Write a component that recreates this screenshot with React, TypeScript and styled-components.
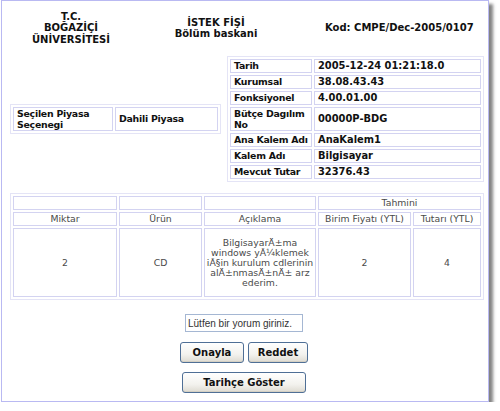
import * as React from "react";
import styled, { createGlobalStyle } from "styled-components";

const Global = createGlobalStyle`
  html, body { margin: 0; padding: 0; background: #fff; }
  body { font-family: "DejaVu Sans", Verdana, sans-serif; }
`;

const Frame = styled.div`
  box-sizing: border-box;
  margin-left: 1px;
  width: 488px;
  height: 402px;
  border: 1px solid #b9b9f2;
  background: #fff;
  box-shadow: 4px 4px 3px rgba(90, 90, 90, 0.75);
  padding: 9px 0 0 0;
`;

const Header = styled.div`
  display: grid;
  grid-template-columns: 138px 152px 1fr;
  align-items: center;
  font-weight: bold;
  font-size: 10px;
  line-height: 11.5px;
  color: #111;
  height: 36px;
`;

const HeaderCell = styled.div<{ $left?: number }>`
  text-align: ${(p) => (p.$left ? "left" : "center")};
  padding-left: ${(p) => p.$left || 0}px;
`;

const Middle = styled.div`
  display: flex;
  align-items: center;
  gap: 6px;
  padding: 10px 0 0 8px;
`;

const Table = styled.table<{ $width: number }>`
  width: ${(p) => p.$width}px;
  border: 1px solid #e4e4f6;
  border-spacing: 2px;
  table-layout: fixed;
  font-size: 10px;
  color: #111;
`;

const Cell = styled.td<{ $center?: boolean }>`
  border: 1px solid #d3d3f1;
  padding: 0 2px;
  text-align: ${(p) => (p.$center ? "center" : "left")};
  vertical-align: middle;
`;

const InfoCell = styled(Cell)<{ $label?: boolean }>`
  font-weight: bold;
  font-size: ${(p) => (p.$label ? "9.4px" : "9.9px")};
  letter-spacing: ${(p) => (p.$label ? "-0.25px" : "0")};
  line-height: 10.5px;
  height: 11px;
  padding: 1px 2px 0 3px;
`;

const ItemTable = styled(Table)`
  margin: 11px 0 0 8px;
  font-size: 9.3px;
  color: #4a4a4a;
`;

const ItemCell = styled(Cell)<{ $tall?: boolean }>`
  height: ${(p) => (p.$tall ? "67px" : "12px")};
  line-height: 10px;
  padding: 0 1px;
`;

const Form = styled.div`
  display: flex;
  flex-direction: column;
  align-items: center;
  padding-top: 14px;
  padding-right: 2px;
`;

const Comment = styled.input`
  box-sizing: border-box;
  width: 118px;
  height: 18px;
  border: 1px solid #a5b7d3;
  font-family: "Liberation Sans", Arial, sans-serif;
  font-size: 10px;
  color: #333;
  padding: 0 2px;
  outline: none;
`;

const ButtonRow = styled.div<{ $top: number }>`
  display: flex;
  gap: 4px;
  margin-top: ${(p) => p.$top}px;
`;

const Button = styled.button<{ $width: number }>`
  box-sizing: border-box;
  width: ${(p) => p.$width}px;
  height: 21px;
  border: 1px solid #4f6f96;
  border-radius: 3px;
  background: linear-gradient(#ffffff, #f3f2ee 60%, #dedbd2);
  font-family: "DejaVu Sans", Verdana, sans-serif;
  font-weight: bold;
  font-size: 10px;
  color: #111;
  padding: 0;
  box-shadow: inset 0 -1px 0 #d4d0c4;
`;

const info: [string, string][] = [
  ["Tarih", "2005-12-24 01:21:18.0"],
  ["Kurumsal", "38.08.43.43"],
  ["Fonksiyonel", "4.00.01.00"],
  ["Bütçe Dagılım No", "00000P-BDG"],
  ["Ana Kalem Adı", "AnaKalem1"],
  ["Kalem Adı", "Bilgisayar"],
  ["Mevcut Tutar", "32376.43"],
];

export default function App() {
  return (
    <>
      <Global />
      <Frame>
        <Header>
          <HeaderCell>
            T.C.
            <br />
            BOĞAZİÇİ
            <br />
            ÜNİVERSİTESİ
          </HeaderCell>
          <HeaderCell>
            İSTEK FİŞİ
            <br />
            Bölüm baskani
          </HeaderCell>
          <HeaderCell $left={33}>Kod: CMPE/Dec-2005/0107</HeaderCell>
        </Header>

        <Middle>
          <Table $width={211}>
            <colgroup>
              <col style={{ width: 100 }} />
              <col />
            </colgroup>
            <tbody>
              <tr>
                <InfoCell $label>Seçilen Piyasa Seçenegi</InfoCell>
                <InfoCell $label>Dahili Piyasa</InfoCell>
              </tr>
            </tbody>
          </Table>
          <Table $width={257}>
            <colgroup>
              <col style={{ width: 82 }} />
              <col />
            </colgroup>
            <tbody>
              {info.map(([k, v]) => (
                <tr key={k}>
                  <InfoCell $label>{k}</InfoCell>
                  <InfoCell>{v}</InfoCell>
                </tr>
              ))}
            </tbody>
          </Table>
        </Middle>

        <ItemTable $width={474}>
          <colgroup>
            <col style={{ width: 104 }} />
            <col style={{ width: 83 }} />
            <col style={{ width: 112 }} />
            <col style={{ width: 93 }} />
            <col />
          </colgroup>
          <tbody>
            <tr>
              <ItemCell />
              <ItemCell />
              <ItemCell />
              <ItemCell $center colSpan={2}>
                Tahmini
              </ItemCell>
            </tr>
            <tr>
              <ItemCell $center>Miktar</ItemCell>
              <ItemCell $center>Ürün</ItemCell>
              <ItemCell $center>Açıklama</ItemCell>
              <ItemCell $center>Birim Fiyatı (YTL)</ItemCell>
              <ItemCell $center>Tutarı (YTL)</ItemCell>
            </tr>
            <tr>
              <ItemCell $center $tall>2</ItemCell>
              <ItemCell $center $tall>CD</ItemCell>
              <ItemCell $center $tall>
                BilgisayarÄ±ma windows yÃ¼klemek iÃ§in kurulum cdlerinin alÄ±nmasÄ±nÄ± arz ederim.
              </ItemCell>
              <ItemCell $center $tall>2</ItemCell>
              <ItemCell $center $tall>4</ItemCell>
            </tr>
          </tbody>
        </ItemTable>

        <Form>
          <Comment defaultValue="Lütfen bir yorum giriniz." />
          <ButtonRow $top={10}>
            <Button $width={64}>Onayla</Button>
            <Button $width={60}>Reddet</Button>
          </ButtonRow>
          <ButtonRow $top={9}>
            <Button $width={124}>Tarihçe Göster</Button>
          </ButtonRow>
        </Form>
      </Frame>
    </>
  );
}
